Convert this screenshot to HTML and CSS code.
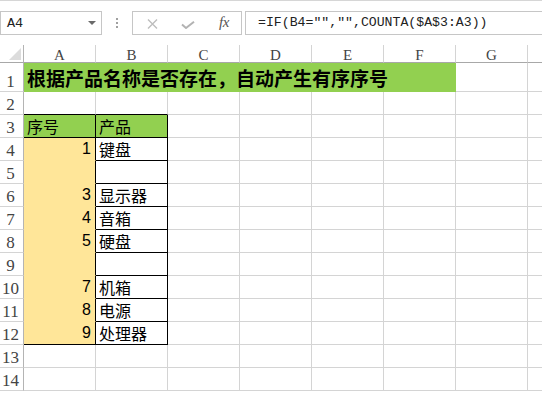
FILE: index.html
```html
<!DOCTYPE html>
<html lang="zh-CN">
<head>
<meta charset="utf-8">
<title>Sheet</title>
<link rel="stylesheet" href="styles.css">
</head>
<body>
<div class="app">
  <div class="toolbar">
    <div class="namebox">
      <span class="name">A4</span>
      <svg class="drop" width="8" height="4" viewBox="0 0 8 4"><polygon points="0,0 8,0 4,4" fill="#6a6a6a"/></svg>
    </div>
    <div class="sep">
      <svg width="2" height="10" viewBox="0 0 2 10"><rect x="0" y="0" width="2" height="2" fill="#a0a0a0"/><rect x="0" y="4" width="2" height="2" fill="#a0a0a0"/><rect x="0" y="8" width="2" height="2" fill="#a0a0a0"/></svg>
    </div>
    <div class="fxbox">
      <svg class="ico-x" width="11" height="10" viewBox="0 0 11 10"><path d="M1 0.5 L10 9.5 M10 0.5 L1 9.5" stroke="#bdbdbd" stroke-width="1.4" fill="none"/></svg>
      <svg class="ico-ok" width="14" height="8" viewBox="0 0 14 8"><path d="M1 3.5 L5 7 L13 0.8" stroke="#b3b3b3" stroke-width="2" fill="none"/></svg>
      <span class="fx">fx</span>
    </div>
    <div class="formula">=IF(B4="","",COUNTA($A$3:A3))</div>
  </div>

  <div class="grid">
    <!-- header -->
    <div class="corner"><svg width="12" height="12" viewBox="0 0 12 12"><polygon points="0,12 12,0 12,12" fill="#dcdcdc"/></svg></div>
    <div class="ch">A</div><div class="ch">B</div><div class="ch">C</div><div class="ch">D</div><div class="ch">E</div><div class="ch">F</div><div class="ch">G</div><div class="ch"></div>

    <!-- row 1 -->
    <div class="rh">1</div>
    <div class="title">根据产品名称是否存在，自动产生有序序号</div>
    <div class="c"></div><div class="c"></div>

    <!-- row 2 -->
    <div class="rh">2</div>
    <div class="c tb"></div><div class="c tb"></div><div class="c"></div><div class="c"></div><div class="c"></div><div class="c"></div><div class="c"></div><div class="c"></div>

    <!-- row 3 -->
    <div class="rh">3</div>
    <div class="c th">序号</div><div class="c th">产品</div><div class="c"></div><div class="c"></div><div class="c"></div><div class="c"></div><div class="c"></div><div class="c"></div>

    <div class="rh">4</div>
    <div class="c num">1</div><div class="c prod">键盘</div><div class="c"></div><div class="c"></div><div class="c"></div><div class="c"></div><div class="c"></div><div class="c"></div>

    <div class="rh">5</div>
    <div class="c num"></div><div class="c prod"></div><div class="c"></div><div class="c"></div><div class="c"></div><div class="c"></div><div class="c"></div><div class="c"></div>

    <div class="rh">6</div>
    <div class="c num">3</div><div class="c prod">显示器</div><div class="c"></div><div class="c"></div><div class="c"></div><div class="c"></div><div class="c"></div><div class="c"></div>

    <div class="rh">7</div>
    <div class="c num">4</div><div class="c prod">音箱</div><div class="c"></div><div class="c"></div><div class="c"></div><div class="c"></div><div class="c"></div><div class="c"></div>

    <div class="rh">8</div>
    <div class="c num">5</div><div class="c prod">硬盘</div><div class="c"></div><div class="c"></div><div class="c"></div><div class="c"></div><div class="c"></div><div class="c"></div>

    <div class="rh">9</div>
    <div class="c num"></div><div class="c prod"></div><div class="c"></div><div class="c"></div><div class="c"></div><div class="c"></div><div class="c"></div><div class="c"></div>

    <div class="rh">10</div>
    <div class="c num">7</div><div class="c prod">机箱</div><div class="c"></div><div class="c"></div><div class="c"></div><div class="c"></div><div class="c"></div><div class="c"></div>

    <div class="rh">11</div>
    <div class="c num">8</div><div class="c prod">电源</div><div class="c"></div><div class="c"></div><div class="c"></div><div class="c"></div><div class="c"></div><div class="c"></div>

    <div class="rh">12</div>
    <div class="c num last">9</div><div class="c prod">处理器</div><div class="c"></div><div class="c"></div><div class="c"></div><div class="c"></div><div class="c"></div><div class="c"></div>

    <div class="rh">13</div>
    <div class="c"></div><div class="c"></div><div class="c"></div><div class="c"></div><div class="c"></div><div class="c"></div><div class="c"></div><div class="c"></div>

    <div class="rh">14</div>
    <div class="c"></div><div class="c"></div><div class="c"></div><div class="c"></div><div class="c"></div><div class="c"></div><div class="c"></div><div class="c"></div>
  </div>
</div>
</body>
</html>
```

FILE: styles.css
```css
* { box-sizing: border-box; }
html, body { margin: 0; padding: 0; background: #fff; }
body { width: 542px; height: 399px; overflow: hidden; }
.app { width: 542px; overflow: hidden; }

.toolbar {
  height: 45px;
  border-top: 1px solid #d6d6d6;
  padding-top: 10px;
  display: flex;
  align-items: flex-start;
  white-space: nowrap;
}
.toolbar > * { flex-shrink: 0; }
.namebox {
  width: 102px;
  height: 24px;
  border: 1px solid #c6c6c6;
  display: flex;
  align-items: center;
  padding-left: 6px;
  position: relative;
}
.name {
  font-family: "Liberation Mono", monospace;
  font-size: 13.5px;
  color: #222;
}
.drop { position: absolute; left: 87px; top: 9px; }
.sep {
  width: 30px;
  height: 24px;
  display: flex;
  justify-content: center;
  padding-top: 7px;
}
.fxbox {
  width: 110px;
  height: 24px;
  border: 1px solid #c6c6c6;
  position: relative;
}
.ico-x { position: absolute; left: 14px; top: 7px; }
.ico-ok { position: absolute; left: 48px; top: 9px; }
.fx {
  position: absolute; left: 86px; top: 2px;
  font-family: "Liberation Serif", serif;
  font-style: italic;
  font-size: 15px;
  color: #555;
  letter-spacing: -0.5px;
}
.formula {
  margin-left: 3px;
  width: 320px;
  height: 24px;
  border: 1px solid #c6c6c6;
  padding-left: 12px;
  font-family: "Liberation Mono", monospace;
  font-size: 13.2px;
  line-height: 22px;
  color: #222;
}

.grid {
  display: grid;
  grid-template-columns: 24px repeat(8, 72px);
  grid-template-rows: 18px 29px repeat(13, 23px);
  width: 610px;
}
.grid > div {
  border-right: 1px solid #d4d4d4;
  border-bottom: 1px solid #d4d4d4;
}
.grid > .corner {
  border-right: 1px solid #b4b4b4;
  border-bottom: 1px solid #a8a8a8;
  display: flex;
  justify-content: flex-end;
  align-items: flex-end;
  padding: 0 2px 2px 0;
}
.grid > .ch {
  border-bottom: 1px solid #a8a8a8;
  font-family: "Liberation Serif", serif;
  font-size: 15px;
  color: #444;
  text-align: center;
  line-height: 18px;
  padding-top: 1px;
}
.grid > .rh {
  border-right: 1px solid #b4b4b4;
  font-family: "Liberation Serif", serif;
  font-size: 17px;
  color: #444;
  display: flex;
  align-items: flex-end;
  justify-content: center;
  padding-right: 2px;
  padding-bottom: 1px;
  line-height: 17px;
}
.grid > .title {
  grid-column: span 6;
  background: #92d050;
  border-right-color: #92d050;
  border-bottom-color: #92d050;
  font-family: "Noto Sans CJK SC", sans-serif;
  font-weight: 700;
  font-size: 19px;
  color: #000;
  display: flex;
  align-items: center;
  padding-left: 3px;
  padding-top: 1px;
}
.grid > .tb { border-bottom-color: #000; }
.grid > .th {
  background: #92d050;
  border-right-color: #000;
  border-bottom-color: #000;
  font-family: "Noto Sans CJK SC", sans-serif;
  font-size: 16px;
  line-height: 20px;
  padding-left: 3px;
  padding-top: 1px;
  color: #000;
}
.grid > .num {
  background: #ffe699;
  border-right-color: #000;
  border-bottom-color: #ffe699;
  font-family: "Liberation Sans", sans-serif;
  font-size: 16px;
  line-height: 18px;
  text-align: right;
  padding-right: 4px;
  padding-top: 2px;
  color: #000;
}
.grid > .num.last { border-bottom-color: #000; }
.grid > .prod {
  border-right-color: #000;
  border-bottom-color: #000;
  font-family: "Noto Sans CJK SC", sans-serif;
  font-size: 16px;
  line-height: 20px;
  padding-left: 3px;
  padding-top: 1px;
  color: #000;
}
```
